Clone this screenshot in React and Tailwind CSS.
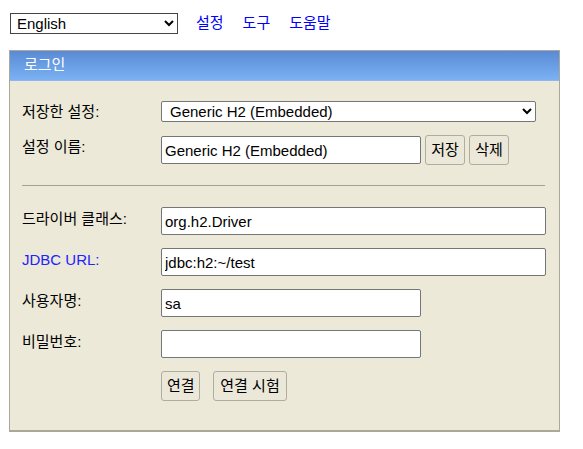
import { useState } from "react";

const font = { fontFamily: '"Liberation Sans", "Noto Sans CJK KR", sans-serif' };

function Row({ label, blue, children, top = "pt-[3px]" }) {
  return (
    <div className="flex items-start">
      <div className={`w-[139px] shrink-0 text-[15px] leading-[17px] ${top} ${blue ? "text-[#2222ff]" : "text-black"}`}>
        {label}
      </div>
      <div className="flex items-center gap-[4px]">{children}</div>
    </div>
  );
}

const inputCls =
  "h-[28px] bg-white border border-[#767676] rounded-[2px] px-[3px] text-[15px] text-black outline-none";
const btnCls =
  "h-[30px] border border-[#b0ada0] rounded-[3px] bg-[#ebe8da] px-[5px] text-[15px] text-black whitespace-nowrap";

export default function App() {
  const [lang, setLang] = useState("en");
  const [saved, setSaved] = useState("h2emb");
  const [name, setName] = useState("Generic H2 (Embedded)");
  const [driver, setDriver] = useState("org.h2.Driver");
  const [url, setUrl] = useState("jdbc:h2:~/test");
  const [user, setUser] = useState("sa");
  const [pass, setPass] = useState("");

  return (
    <div className="min-h-screen bg-white" style={font}>
      {/* toolbar */}
      <div className="flex items-center pl-[10px] pt-[13px] h-[34px]">
        <select
          value={lang}
          onChange={(e) => setLang(e.target.value)}
          className="w-[168px] h-[21px] border border-[#444] bg-white text-[15px] text-black pl-[2px]"
        >
          <option value="en">English</option>
        </select>
        <div className="flex gap-[19px] ml-[18px] text-[15px] text-[#0000ff]">
          <a href="#">설정</a>
          <a href="#">도구</a>
          <a href="#">도움말</a>
        </div>
      </div>

      {/* login panel */}
      <div className="ml-[9px] mt-[16px] w-[551px] border border-[#aca899] border-b-2 bg-[#ece9d8]">
        <div className="h-[30px] flex items-center pl-[14px] text-[15px] text-white bg-linear-to-b from-[#5a8ad5] to-[#7bb2f3] border-b border-[#8ab8ec]">
          로그인
        </div>

        <div className="pl-[12px] pt-[20px] pb-[29px]">
          <div className="flex flex-col gap-[13px]">
            <Row label="저장한 설정:" top="pt-[2px]">
              <select
                value={saved}
                onChange={(e) => setSaved(e.target.value)}
                className="w-[375px] h-[21px] bg-white border border-[#767676] rounded-[2px] text-[15px] text-black pl-[4px]"
              >
                <option value="h2emb">Generic H2 (Embedded)</option>
              </select>
            </Row>
            <Row label="설정 이름:" top="pt-[3px]">
              <input className={`${inputCls} w-[260px] h-[27px]`} value={name} onChange={(e) => setName(e.target.value)} />
              <button className={`${btnCls} w-[40px] px-0`}>저장</button>
              <button className={`${btnCls} w-[40px] px-0`}>삭제</button>
            </Row>
          </div>

          <div className="mt-[20px] mb-[21px] mr-[14px] border-t border-[#a4a294]" />

          <div className="flex flex-col gap-[13px]">
            <Row label="드라이버 클래스:">
              <input className={`${inputCls} w-[385px]`} value={driver} onChange={(e) => setDriver(e.target.value)} />
            </Row>
            <Row label="JDBC URL:" blue>
              <input className={`${inputCls} w-[385px]`} value={url} onChange={(e) => setUrl(e.target.value)} />
            </Row>
            <Row label="사용자명:">
              <input className={`${inputCls} w-[260px]`} value={user} onChange={(e) => setUser(e.target.value)} />
            </Row>
            <Row label="비밀번호:">
              <input type="password" className={`${inputCls} w-[260px]`} value={pass} onChange={(e) => setPass(e.target.value)} />
            </Row>
            <Row label="">
              <button className={`${btnCls} w-[39px] px-0`}>연결</button>
              <button className={`${btnCls} w-[74px] px-0 ml-[9px]`}>연결 시험</button>
            </Row>
          </div>
        </div>
      </div>
    </div>
  );
}
